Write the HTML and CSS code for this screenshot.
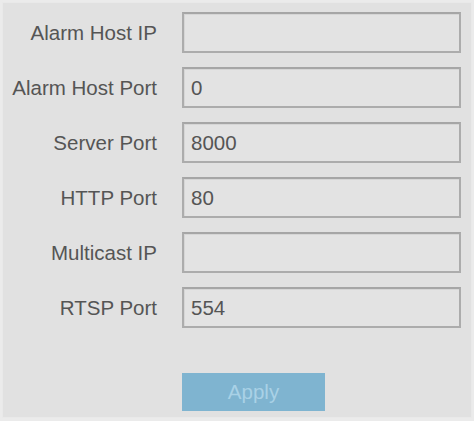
FILE: index.html
```html
<!DOCTYPE html>
<html lang="en">

<head>
    <meta charset="UTF-8">
    <meta name="viewport" content="width=device-width, initial-scale=1.0">
    <title>Network Settings</title>

    <link rel="stylesheet" href="styles.css">
</head>

<body>
    <div class="panel">
        <div class="form">
            <label class="label">Alarm Host IP</label>
            <div class="field"></div>

            <label class="label">Alarm Host Port</label>
            <div class="field">0</div>

            <label class="label">Server Port</label>
            <div class="field">8000</div>

            <label class="label">HTTP Port</label>
            <div class="field">80</div>

            <label class="label">Multicast IP</label>
            <div class="field"></div>

            <label class="label">RTSP Port</label>
            <div class="field">554</div>
        </div>
        <div class="actions">
            <span class="btn">Apply</span>
        </div>
    </div>
</body>

</html>
```

FILE: styles.css
```css
* {
    padding: 0;
    margin: 0;
    box-sizing: border-box;
}

body {
    background: #ebebeb;
    font-family: "Liberation Sans", Arial, sans-serif;
    font-size: 20.5px;
    color: #555;
}

.panel {
    margin: 2px 2px 0 2px;
    height: 416px;
    padding-top: 9px;
    background: #e1e1e1;
    border: 1px solid #e9e9e9;
}

.form {
    display: grid;
    grid-template-columns: 154px 279px;
    grid-auto-rows: 41px;
    column-gap: 25px;
    row-gap: 14px;
}

.label {
    display: flex;
    align-items: center;
    justify-content: flex-end;
    white-space: nowrap;
}

.field {
    display: flex;
    align-items: center;
    padding-left: 7px;
    background: #e3e3e3;
    border: 2px solid #acacac;
    border-top-color: #a6a6a6;
    box-shadow: inset 1px 1px 0 #d6d6d6;
}

.actions {
    padding: 45px 0 0 179px;
}

.btn {
    display: flex;
    align-items: center;
    justify-content: center;
    width: 143px;
    height: 38px;
    background: #7fb4d0;
    color: #a9d1e6;
}
```
